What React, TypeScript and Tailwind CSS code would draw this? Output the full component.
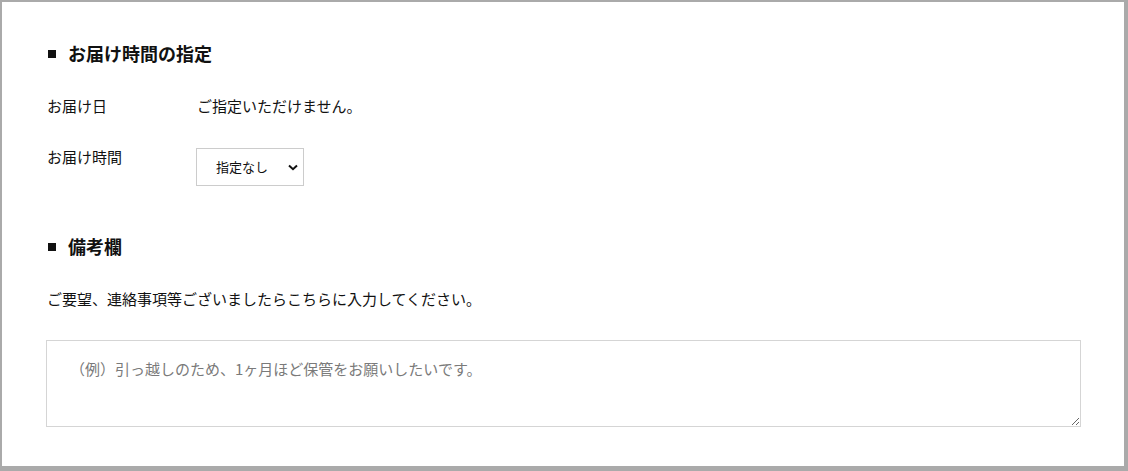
import React from "react";

export default function App() {
  const font = { fontFamily: '"Noto Sans CJK JP", "Noto Sans", sans-serif' };
  return (
    <div
      className="w-[1128px] h-[471px] bg-white border-t-2 border-l-2 border-r-4 border-b-[5px] border-[#aaaaaa] pl-[44px] pr-[43px] pt-[38px] text-[#111] box-border"
      style={font}
    >
      <h2 className="flex items-center h-[27px] text-[18px] font-bold leading-[27px]">
        <span className="shrink-0 w-[8px] h-[8px] bg-[#111] ml-[2px] mr-[12px] mt-[1px]" />
        お届け時間の指定
      </h2>

      <div className="flex mt-[27px] text-[15px] leading-[24px]">
        <div className="w-[151px] pl-[1px]">お届け日</div>
        <div>ご指定いただけません。</div>
      </div>

      <div className="flex mt-[27px] text-[15px] leading-[24px]">
        <div className="w-[150px] pl-[1px]">お届け時間</div>
        <div className="relative mt-[3px] w-[108px] h-[38px]">
          <select
            className="appearance-none w-full h-full border border-[#cccccc] bg-white pl-[19px] text-[13px] text-[#111] outline-none"
            style={font}
            defaultValue="none"
          >
            <option value="none">指定なし</option>
          </select>
          <svg
            className="absolute right-[6px] top-[16px] pointer-events-none"
            width="10"
            height="7"
            viewBox="0 0 10 7"
          >
            <path d="M1 1.5 L5 5.2 L9 1.5" fill="none" stroke="#111" strokeWidth="2" />
          </svg>
        </div>
      </div>

      <h2 className="flex items-center h-[27px] mt-[47px] text-[18px] font-bold leading-[27px]">
        <span className="shrink-0 w-[8px] h-[8px] bg-[#111] ml-[2px] mr-[12px] mt-[1px]" />
        備考欄
      </h2>

      <p className="mt-[27px] text-[15px] leading-[24px] pl-[1px]">
        ご要望、連絡事項等ございましたらこちらに入力してください。
      </p>

      <textarea
        className="block mt-[29px] w-full h-[87px] border border-[#d5d5d5] pt-[16px] pl-[23px] text-[15px] leading-[24px] placeholder:text-[#7a7a7a] outline-none"
        style={font}
        placeholder="（例）引っ越しのため、1ヶ月ほど保管をお願いしたいです。"
      />
    </div>
  );
}
